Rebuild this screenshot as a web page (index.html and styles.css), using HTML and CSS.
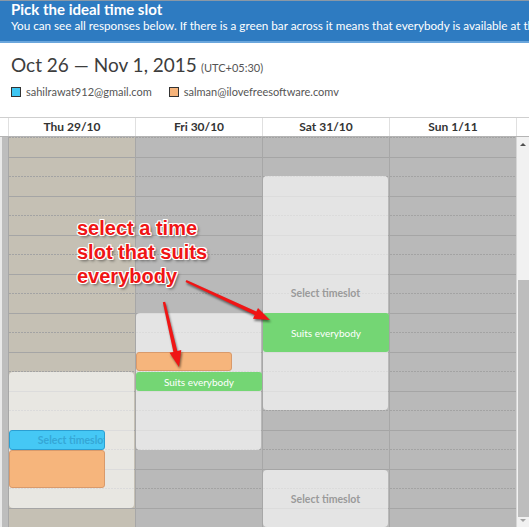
FILE: index.html
```html
<!DOCTYPE html>
<html lang="en">
<head>
  <meta charset="UTF-8">
  <title>Pick the ideal time slot</title>
  <link rel="stylesheet" href="styles.css">
</head>
<body>

<div class="topbar">
  <div class="topbar-title">Pick the ideal time slot</div>
  <div class="topbar-sub">You can see all responses below. If there is a green bar across it means that everybody is available at that time.</div>
</div>

<div class="range">
  <span class="range-date">Oct 26 — Nov 1, 2015</span>
  <span class="range-tz">(UTC+05:30)</span>
</div>

<div class="legend">
  <span class="person"><i class="swatch swatch-blue"></i>sahilrawat912@gmail.com</span>
  <span class="person"><i class="swatch swatch-orange"></i>salman@ilovefreesoftware.comv</span>
</div>

<div class="calendar">
  <div class="cal-head">
    <div class="gutter"></div>
    <div class="day">Thu 29/10</div>
    <div class="day">Fri 30/10</div>
    <div class="day">Sat 31/10</div>
    <div class="day">Sun 1/11</div>
    <div class="scroll-cap"></div>
  </div>

  <div class="cal-body">
    <div class="gutter"></div>

    <!-- thu -->
    <div class="col col-today">
      <div class="slot" style="top:235px;height:136px"></div>
      <div class="mark mark-blue" style="top:293px;height:20px"><span>Select timeslot</span></div>
      <div class="mark mark-orange" style="top:313px;height:38px"></div>
    </div>

    <!-- fri -->
    <div class="col">
      <div class="slot" style="top:176px;height:137px"></div>
      <div class="mark mark-orange" style="top:215px;height:19px"></div>
      <div class="match" style="top:235px;height:19px">Suits everybody</div>
    </div>

    <!-- sat -->
    <div class="col">
      <div class="slot" style="top:39px;height:234px"><span>Select timeslot</span></div>
      <div class="match" style="top:176px;height:39px">Suits everybody</div>
      <div class="slot" style="top:333px;height:57px"><span>Select timeslot</span></div>
    </div>

    <!-- sun -->
    <div class="col"></div>

    <div class="scrollbar">
      <span class="sb-up"></span>
      <span class="sb-thumb"></span>
      <span class="sb-down"></span>
    </div>
  </div>
</div>

<!-- annotation drawn over the screenshot -->
<div class="note">select a time<br>slot that suits<br>everybody</div>
<svg class="arrows" width="529" height="531" viewBox="0 0 529 531">
  <polygon points="185.5,282.1 254.7,315.1 253,318.7 270,320 258,307.9 256.3,311.5 186.5,279.9"/>
  <polygon points="162.8,302.3 173.4,351.9 169.5,352.8 179,367 181.3,350 177.3,350.9 165.2,301.7"/>
</svg>

</body>
</html>
```

FILE: styles.css
```css
body {
  margin: 0;
  font-family: Lato, "Open Sans", sans-serif;
  color: #333;
  background: #fff;
  width: 529px;
  height: 531px;
  overflow: hidden;
  position: relative;
}

.topbar {
  background: #2e7bc1;
  border-top: 1px solid #8a98a6;
  border-bottom: 2px solid #6aa6dc;
  padding: 0 11px 9px;
  color: #fff;
  white-space: nowrap;
  overflow: hidden;
}

.topbar-title {
  font-size: 15px;
  font-weight: bold;
  line-height: 17px;
}

.topbar-sub {
  font-size: 11.7px;
  line-height: 14px;
}

.range {
  margin: 10px 11px 0;
  line-height: 24px;
  color: #3d3d3d;
}

.range-date {
  font-size: 19px;
}

.range-tz {
  font-size: 11px;
  color: #555;
}

.legend {
  display: flex;
  gap: 17px;
  margin: 5px 11px 0;
  font-size: 11px;
  line-height: 14px;
  color: #555;
}

.person {
  display: flex;
  align-items: center;
  gap: 5px;
}

.swatch {
  width: 10px;
  height: 10px;
  box-sizing: border-box;
  border: 1px solid #333;
}

.swatch-blue {
  background: #3ec6f2;
}

.swatch-orange {
  background: #f6b47b;
}

.calendar {
  margin-top: 18px;
}

.cal-head {
  display: flex;
  border-top: 1px solid #cfcfcf;
  border-bottom: 1px solid #b4b4b4;
  height: 18px;
  background: #fff;
}

.cal-head .gutter {
  width: 8px;
}

.day {
  width: 126px;
  border-left: 1px solid #e0e0e0;
  text-align: center;
  font-size: 12px;
  font-weight: bold;
  line-height: 18px;
  color: #333;
}

.scroll-cap {
  width: 12px;
  border-left: 1px solid #e0e0e0;
}

.cal-body {
  display: flex;
  height: 390px;
  overflow: hidden;
  background: #b9b9b9;
}

.cal-body .gutter {
  width: 8px;
  background: #bdbdbd;
  border-left: 2px solid #e9e9e9;
  box-sizing: border-box;
}

.col {
  position: relative;
  width: 126px;
  border-left: 1px solid #a7a7a7;
  background-color: #b9b9b9;
  background-image:
    conic-gradient(at 2px 1px, transparent 0deg 270deg, #a3a3a3 270deg),
    linear-gradient(to bottom, transparent 20px, #a5a5a5 20px 21px, transparent 21px);
  background-size: 3px 39px, 100% 39px;
}

.col-today {
  background-color: #c5c0b4;
}

.slot {
  position: absolute;
  left: 0;
  right: 1px;
  border-radius: 4px;
  background: rgba(255, 255, 255, 0.61);
  display: flex;
  align-items: center;
  justify-content: center;
  font-size: 10.5px;
  font-weight: bold;
  color: #9a9a9a;
  white-space: nowrap;
}

.mark {
  position: absolute;
  left: 0;
  width: 96px;
  box-sizing: border-box;
  border-radius: 3px;
  overflow: hidden;
}

.mark span {
  display: block;
  width: 125px;
  text-align: center;
  font-size: 10.5px;
  font-weight: bold;
  line-height: 18px;
  white-space: nowrap;
  color: #35a7d6;
}

.mark-blue {
  background: #45c8f5;
  border: 1px solid #2b9fd2;
}

.mark-orange {
  background: #f6b57c;
  border: 1px solid #d99a6b;
}

.match {
  position: absolute;
  left: 0;
  right: 0;
  border-radius: 3px;
  background: #74d674;
  color: #fff;
  font-size: 10px;
  display: flex;
  align-items: center;
  justify-content: center;
}

.scrollbar {
  position: relative;
  width: 12px;
  border-left: 1px solid #d6d6d6;
  background: #f1f1f1;
}

.sb-up {
  position: absolute;
  top: 6px;
  left: 3px;
  border-left: 3px solid transparent;
  border-right: 3px solid transparent;
  border-bottom: 3px solid #505050;
}

.sb-thumb {
  position: absolute;
  top: 143px;
  left: 1px;
  right: 0;
  height: 237px;
  background: #bdbdbd;
}

.sb-down {
  position: absolute;
  bottom: 5px;
  left: 3px;
  border-left: 3px solid transparent;
  border-right: 3px solid transparent;
  border-top: 3px solid #a3a3a3;
}

.note {
  position: absolute;
  left: 77px;
  top: 216px;
  font-family: "Liberation Sans", Arial, sans-serif;
  font-size: 20px;
  font-weight: bold;
  line-height: 24px;
  color: #f01515;
  text-shadow:
    1px 0 #fff, -1px 0 #fff, 0 1px #fff, 0 -1px #fff,
    1px 1px #fff, -1px -1px #fff, 1px -1px #fff, -1px 1px #fff,
    2px 2px 3px rgba(0, 0, 0, 0.55);
}

.arrows {
  position: absolute;
  left: 0;
  top: 0;
  pointer-events: none;
}

.arrows polygon {
  fill: #f01515;
  filter: drop-shadow(1px 2px 1px rgba(0, 0, 0, 0.5));
}
```
